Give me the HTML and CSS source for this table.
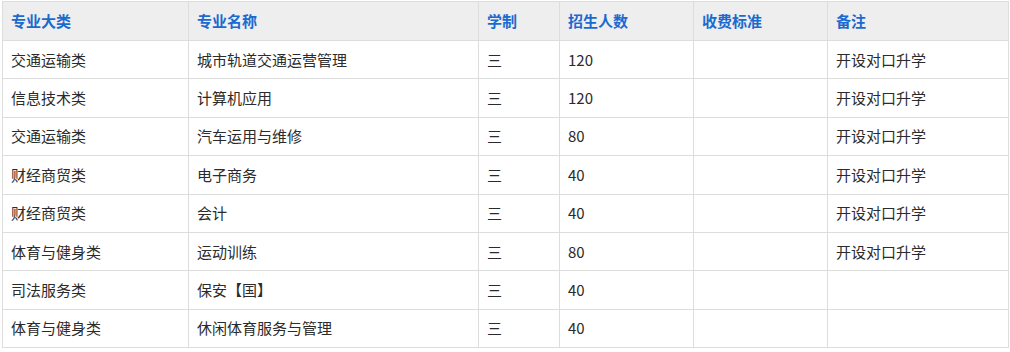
FILE: index.html
```html
<!DOCTYPE html>
<html lang="zh">
<head>
<meta charset="utf-8">
<link rel="stylesheet" href="styles.css">
</head>
<body>
<table class="plan">
  <colgroup>
    <col class="c1"><col class="c2"><col class="c3"><col class="c4"><col class="c5"><col class="c6">
  </colgroup>
  <thead>
    <tr><th>专业大类</th><th>专业名称</th><th>学制</th><th>招生人数</th><th>收费标准</th><th>备注</th></tr>
  </thead>
  <tbody>
    <tr><td>交通运输类</td><td>城市轨道交通运营管理</td><td>三</td><td>120</td><td></td><td>开设对口升学</td></tr>
    <tr><td>信息技术类</td><td>计算机应用</td><td>三</td><td>120</td><td></td><td>开设对口升学</td></tr>
    <tr><td>交通运输类</td><td>汽车运用与维修</td><td>三</td><td>80</td><td></td><td>开设对口升学</td></tr>
    <tr><td>财经商贸类</td><td>电子商务</td><td>三</td><td>40</td><td></td><td>开设对口升学</td></tr>
    <tr><td>财经商贸类</td><td>会计</td><td>三</td><td>40</td><td></td><td>开设对口升学</td></tr>
    <tr><td>体育与健身类</td><td>运动训练</td><td>三</td><td>80</td><td></td><td>开设对口升学</td></tr>
    <tr><td>司法服务类</td><td>保安【国】</td><td>三</td><td>40</td><td></td><td></td></tr>
    <tr><td>体育与健身类</td><td>休闲体育服务与管理</td><td>三</td><td>40</td><td></td><td></td></tr>
  </tbody>
</table>
</body>
</html>
```
FILE: styles.css
```css
html, body {
  margin: 0;
  padding: 0;
  background: #ffffff;
}
body {
  padding: 1px 0 0 2px;
  font-family: "Noto Sans CJK SC", "Noto Sans", sans-serif;
  font-size: 15px;
  color: #333333;
}
.plan {
  border-collapse: collapse;
  table-layout: fixed;
  width: 1006px;
}
.c1 { width: 186px; }
.c2 { width: 290px; }
.c3 { width: 81px; }
.c4 { width: 134px; }
.c5 { width: 134px; }
.c6 { width: 181px; }
.plan th, .plan td {
  border: 1px solid #dddddd;
  padding: 0 8px;
  text-align: left;
  vertical-align: middle;
  line-height: 20px;
  white-space: nowrap;
}
.plan th {
  background: #eeeeee;
  color: #1a6ad0;
  font-weight: bold;
  height: 38px;
}
.plan td {
  height: 37.4px;
  color: #2b2b2b;
}
```
